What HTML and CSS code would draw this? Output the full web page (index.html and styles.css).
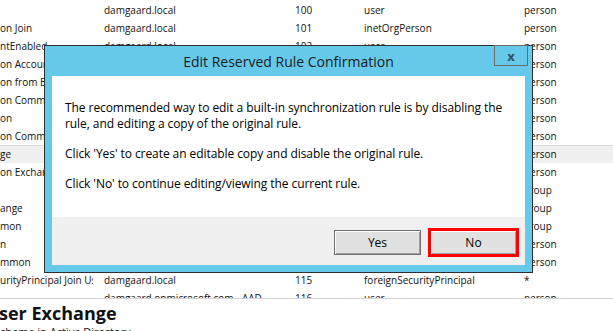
FILE: index.html
```html
<!DOCTYPE html>
<html lang="en">
<head>
  <meta charset="UTF-8" />
  <title>Synchronization Rules Editor</title>
  <link rel="stylesheet" href="styles.css">
</head>
<body>
  <!-- Rule list behind the dialog -->
  <div class="rules">
    <div class="row"><span class="c1"></span><span>damgaard.local</span><span>100</span><span>user</span><span>person</span></div>
    <div class="row"><span class="c1">on Join</span><span>damgaard.local</span><span>101</span><span>inetOrgPerson</span><span>person</span></div>
    <div class="row"><span class="c1">ntEnabled</span><span>damgaard.local</span><span>102</span><span>user</span><span>person</span></div>
    <div class="row"><span class="c1">on AccountEnabled</span><span>damgaard.local</span><span>103</span><span>inetOrgPerson</span><span>person</span></div>
    <div class="row"><span class="c1">on from Exchange</span><span>damgaard.local</span><span>104</span><span>user</span><span>person</span></div>
    <div class="row"><span class="c1">on Common</span><span>damgaard.local</span><span>105</span><span>user</span><span>person</span></div>
    <div class="row"><span class="c1">on</span><span>damgaard.local</span><span>106</span><span>inetOrgPerson</span><span>person</span></div>
    <div class="row"><span class="c1">on Common</span><span>damgaard.local</span><span>107</span><span>inetOrgPerson</span><span>person</span></div>
    <div class="row selected"><span class="c1">ge</span><span>damgaard.local</span><span>108</span><span>user</span><span>person</span></div>
    <div class="row"><span class="c1">on Exchange</span><span>damgaard.local</span><span>109</span><span>inetOrgPerson</span><span>person</span></div>
    <div class="row"><span class="c1"></span><span>damgaard.local</span><span>110</span><span>group</span><span>group</span></div>
    <div class="row"><span class="c1">ange</span><span>damgaard.local</span><span>111</span><span>group</span><span>group</span></div>
    <div class="row"><span class="c1">mon</span><span>damgaard.local</span><span>112</span><span>group</span><span>group</span></div>
    <div class="row"><span class="c1">n</span><span>damgaard.local</span><span>113</span><span>contact</span><span>person</span></div>
    <div class="row"><span class="c1">mmon</span><span>damgaard.local</span><span>114</span><span>contact</span><span>person</span></div>
    <div class="row"><span class="c1">urityPrincipal Join User</span><span>damgaard.local</span><span>115</span><span>foreignSecurityPrincipal</span><span>*</span></div>
    <div class="row"><span class="c1"></span><span>damgaard.onmicrosoft.com - AAD</span><span>116</span><span>user</span><span>person</span></div>
  </div>

  <div class="details">
    <h2>ser Exchange</h2>
    <p>chema in Active Directory</p>
  </div>

  <!-- Confirmation dialog -->
  <div class="dialog">
    <div class="titlebar">Edit Reserved Rule Confirmation</div>
    <button class="close">x</button>
    <div class="body">
      <p>The recommended way to edit a built-in synchronization rule is by disabling the rule, and editing a copy of the original rule.</p>
      <p>Click 'Yes' to create an editable copy and disable the original rule.</p>
      <p>Click 'No' to continue editing/viewing the current rule.</p>
    </div>
    <div class="footer">
      <button class="btn">Yes</button>
      <button class="btn marked">No</button>
    </div>
  </div>
</body>
</html>
```

FILE: styles.css
```css
body {
  margin: 0;
  font-family: "Open Sans", "Noto Sans", sans-serif;
  background: white;
  color: #111;
  overflow: hidden;
  height: 331px;
}

.rules {
  height: 297px;
  padding-top: 1px;
  overflow: hidden;
  border-bottom: 1px solid #d4d4d4;
  font-size: 10px;
}

.row {
  display: grid;
  grid-template-columns: 93px 180px 58px 149px 1fr;
  column-gap: 11px;
  height: 18px;
  line-height: 18px;
  white-space: nowrap;
}

.row span {
  overflow: hidden;
}

.row.selected {
  background: #f0f0f0;
  box-shadow: inset 0 1px 0 #dadada;
}

.details h2 {
  margin: 2px 0 0 -1px;
  font-size: 18px;
  line-height: 24px;
  font-weight: 700;
}

.details p {
  margin: 0;
  font-size: 11px;
  line-height: 14px;
}

.dialog {
  position: absolute;
  left: 44px;
  top: 45px;
  width: 473px;
  border: 1px solid #2e2e2e;
  background: #66c9ea;
  padding: 0 7px 7px;
}

.titlebar {
  height: 30px;
  line-height: 31px;
  text-align: center;
  font-size: 14px;
  color: #1b1b1b;
}

.close {
  position: absolute;
  top: -1px;
  right: 4px;
  width: 34px;
  height: 21px;
  border: 1px solid #6b6b6b;
  background: transparent;
  color: #33505e;
  font-family: "Open Sans", sans-serif;
  font-weight: 700;
  font-size: 13px;
  line-height: 16px;
  padding: 0;
}

.body {
  background: white;
  height: 141px;
  box-sizing: border-box;
  padding: 24px 5px 0 13px;
  font-size: 12px;
  letter-spacing: -0.07px;
  line-height: 15.5px;
  color: #000;
}

.body p {
  margin: 0 0 14.5px;
}

.footer {
  background: #f0f0f0;
  height: 48px;
  box-sizing: border-box;
  padding: 13px 8px 0 0;
  display: flex;
  justify-content: flex-end;
  gap: 9px;
}

.btn {
  width: 87px;
  height: 25px;
  border: 1px solid #707070;
  background: #e1e1e1;
  box-shadow: inset 1px 1px 0 #fcfcfc, inset -1px -1px 0 #a0a0a0;
  font-family: "Open Sans", sans-serif;
  font-size: 12px;
  color: #000;
  padding: 0;
}

.btn.marked {
  outline: 3px solid #ff0000;
  outline-offset: -1px;
}
```
